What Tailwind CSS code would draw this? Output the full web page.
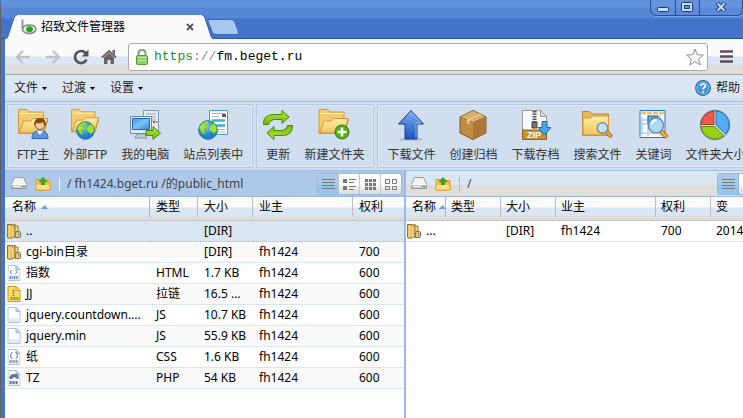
<!DOCTYPE html>
<html lang="zh-CN">
<head>
<meta charset="utf-8">
<title>招致文件管理器</title>
<script src="https://cdn.jsdelivr.net/npm/@tailwindcss/browser@4"></script>
</head>
<body class="h-screen overflow-hidden bg-[#4474ca] font-['Noto_Sans','Noto_Sans_CJK_SC',sans-serif] text-xs leading-4 text-black">
<svg class="absolute h-0 w-0" aria-hidden="true">
  <defs>
    <linearGradient id="gf" x2="0" y2="1"><stop stop-color="#fff0a8"/><stop offset="1" stop-color="#f0c15c"/></linearGradient>
    <linearGradient id="gg" x2="0" y2="1"><stop stop-color="#c2e83a"/><stop offset="1" stop-color="#6cb80c"/></linearGradient>
    <radialGradient id="gw" cx=".4" cy=".3"><stop stop-color="#7fd4ff"/><stop offset="1" stop-color="#1f80cf"/></radialGradient>
    <linearGradient id="gb" x2="0" y2="1"><stop stop-color="#7fb0f2"/><stop offset="1" stop-color="#1b53bd"/></linearGradient>
    <linearGradient id="gs" x2="1" y2="1"><stop stop-color="#3c97e6"/><stop offset=".5" stop-color="#7cc3f7"/><stop offset="1" stop-color="#2b84da"/></linearGradient>
    <symbol id="folder" viewBox="0 0 30 30"><path d="M.5 24.500V2q0-1.500 1.500-1.500h7L11 3h14.500V10L30 10l-4 14.500z" fill="#f3cc72" stroke="#cf9a3a"/><path d="M1 24l4.500-12h7l3-2.500H29.500L25 24z" fill="url(#gf)" stroke="#d09a38"/><path d="M2 4.500h23" stroke="#fff2c4"/></symbol>
    <symbol id="globe" viewBox="0 0 20 20"><circle cx="10" cy="10" r="9.300" fill="url(#gw)" stroke="#1b6fb8"/><path d="M4 3.500q4-3 7-2.500l-1 3-3 1 2 3-3 2 1 5-3-2-3-5q1-3 3-4.500zM12 6l4-3q3 3 3 7l-3 4-2-2-3-2z" fill="#a6e12e" stroke="#5fae2c" stroke-width=".6"/></symbol>
    <symbol id="rowfolder" viewBox="0 0 14 16"><path d="M6 3h5v10.500H6z" fill="#f0d68a" stroke="#a07a30"/><path d="M9 8.500h3.500q1 0 1 1.500v3q0 1.500-1.500 1.500H8z" fill="#e7c878" stroke="#96702a"/><path d="M.5 14.500V1.500h5v1L8 1v12.500L3.500 15.500z" fill="#e3bd5e" stroke="#96702a"/><path d="M2.500 3v11" stroke="#f9e5a4"/><path d="M5.500 4v9.500" stroke="#f4da8e" stroke-width="1.500"/><path d="M11.500 9.500v3" stroke="#5b9bd8"/></symbol>
    <symbol id="sheet" viewBox="0 0 13 16"><path d="M.5.5h8l4 4v11H.5z" fill="#fdfeff" stroke="#b3c2d6"/><path d="M1 11h11v4H1z" fill="#dfeaf8"/><path d="M8.500.5v4h4z" fill="#c9dcf2" stroke="#a5bbd8"/></symbol>
    <symbol id="drive" viewBox="0 0 16 13"><path d="M3.500.500h9L15.500 7v4.500h-15V7z" fill="#f4f4f4" stroke="#999"/><path d="M1 7.500h14v3.500H1z" fill="#c6c6c6"/><path d="M.5 7.500h15M3 9.500h6" stroke="#fff"/><path d="M12 9.500h2" stroke="#4b9b3a"/></symbol>
    <symbol id="upfolder" viewBox="0 0 16 14"><path d="M1 13V2.500h4l1 1h9V13z" fill="#f7c64e" stroke="#e39a2a"/><path d="M1 7h14v6H1z" fill="#fde38a" stroke="#e8a436"/><path d="M8 .5L12 4.500H9.500v3h-3v-3H4z" fill="#35b51c" stroke="#218a10" stroke-width=".7"/></symbol>
    <symbol id="lines" viewBox="0 0 20 20"><path d="M4 5.500h13M4 8.500h13M4 11.500h13M4 14.500h13" stroke="#777"/></symbol>
  </defs>
</svg>
<div class="flex h-full flex-col rounded-tl-md border-l border-[#5f6066] bg-[#4474ca] pl-1">
  <!-- title bar -->
  <header class="-ml-1 flex h-[39px] shrink-0 justify-between border-b border-[#2a569f] bg-[linear-gradient(#6192dc_7px,#5587d6_8px,#5587d6_18px,#4474ca_19px)] pl-1">
    <div class="-mb-px flex items-end">
      <div class="flex h-6 items-stretch">
        <svg class="h-6 w-3" viewBox="0 0 12 24"><path d="M0 24q2 0 3-3L9 3q1-3 3-3v24z" fill="#fafafa"/><path d="M0 24q2 0 3-3L9 3q1-3 3-3" fill="none" stroke="#3765b4"/></svg>
        <div class="flex w-[185px] items-center bg-[#fafafa] pl-1">
          <svg class="h-4 w-4 shrink-0" viewBox="0 0 16 16"><path d="M1.500.5V11M1.500 10.200q.5-4 6.800-4t6.500 4q-.5 4.300-6.500 4.300t-6.800-4.300z" fill="none" stroke="#8d8d8d" stroke-width="1.800"/><ellipse cx="8.500" cy="10.200" rx="3.400" ry="2.900" fill="#21a813"/></svg>
          <span class="ml-1 grow">招致文件管理器</span>
          <button aria-label="关闭标签页" class="mr-2"><svg class="h-2 w-2" viewBox="0 0 8 8"><path d="M1 1l6 6M7 1L1 7" stroke="#555" stroke-width="1.800"/></svg></button>
        </div>
        <svg class="h-6 w-3" viewBox="0 0 12 24"><path d="M0 0q2 0 3 3l6 18q1 3 3 3H0z" fill="#fafafa"/><path d="M0 0q2 0 3 3l6 18q1 3 3 3" fill="none" stroke="#2f5cab"/></svg>
      </div>
      <button aria-label="新标签页" class="-ml-1.5 mb-1"><svg class="h-4 w-8" viewBox="0 0 32 16"><path d="M1 .5h22q3 0 4 3l3.500 9.500q.5 2.500-2 2.500H8q-3 0-4-3L0 2.500Q0 .5 1 .5z" fill="#a5c8f0" stroke="#3c69b6"/></svg></button>
    </div>
    <div class="flex h-4 w-[93px] rounded-b-md border border-t-0 border-[#2b4f91] bg-[linear-gradient(#6594de_7px,#5a8ad8_8px)] shadow-[0_1px_#77a5e8]">
      <button aria-label="最小化" class="flex flex-1 justify-center border-r border-[#2b4f91] pt-[7px]"><svg class="h-[5px] w-3" viewBox="0 0 12 5"><rect x=".5" y=".5" width="11" height="4" rx="1" fill="#c4dcf6" stroke="#1f3d70"/></svg></button>
      <button aria-label="最大化" class="flex flex-1 justify-center border-r border-[#2b4f91] pt-0.5"><svg class="h-[10px] w-3" viewBox="0 0 12 10"><rect x=".5" y=".5" width="11" height="9" rx="1" fill="#c4dcf6" stroke="#1f3d70"/><path d="M3.500 3.500h5v3h-5z" fill="#6493dc" stroke="#1f3d70"/></svg></button>
      <button aria-label="关闭" class="flex w-[42px] justify-center pt-0.5"><svg class="h-[10px] w-3" viewBox="0 0 12 10"><path d="M2 .8l8 8.400M10 .8L2 9.200" stroke="#1f3d70" stroke-width="4"/><path d="M2.500 1.200l7 7.600M9.500 1.200l-7 7.600" stroke="#c4dcf6" stroke-width="2"/></svg></button>
    </div>
  </header>
  <!-- address bar -->
  <nav class="flex h-9 shrink-0 items-center border-b border-[#a5a5a5] bg-[linear-gradient(#fafafa_17px,#dae6f4_18px,#dae6f4_25px,#dfdedb_26px)] pr-2.5 pl-2">
    <button aria-label="后退" class="ml-0.5"><svg class="h-4 w-4" viewBox="0 0 16 16"><path d="M8 2L2 8l6 6M2 8h13" fill="none" stroke="#c3c3c3" stroke-width="2.400"/></svg></button>
    <button aria-label="前进" class="ml-3.5"><svg class="h-4 w-4" viewBox="0 0 16 16"><path d="M8 2l6 6-6 6M14 8H1" fill="none" stroke="#c3c3c3" stroke-width="2.400"/></svg></button>
    <button aria-label="刷新" class="ml-3"><svg class="h-4 w-4" viewBox="0 0 16 16"><path d="M13.500 10.500A6 6 0 1 1 12.500 4" fill="none" stroke="#5a5155" stroke-width="2.700"/><path d="M15.500.5v7h-7z" fill="#5a5155"/></svg></button>
    <button aria-label="主页" class="ml-3"><svg class="h-4 w-4" viewBox="0 0 16 16"><path d="M1 8.500L8 2l7 6.500" fill="none" stroke="#6a6266" stroke-width="2"/><path d="M3 8.500L8 4l5 4.500V15h-3.500v-4h-3v4H3zM11.500 1H14v5l-2.500-2z" fill="#6a6266"/></svg></button>
    <div class="ml-[11px] flex h-7 grow items-center rounded-[3px] border border-[#a9a9a9] bg-white px-[7px]">
      <svg class="h-4 w-3 shrink-0" viewBox="0 0 12 16"><path d="M2.500 7V4q0-3 3.500-3t3.500 3v3" fill="none" stroke="#8d9b8d" stroke-width="2"/><rect x=".5" y="6.500" width="11" height="9" rx="1" fill="#8fd065" stroke="#4c9c35"/><path d="M2 8.500h8M2 11.500h8" stroke="#c3eba5"/></svg>
      <div role="textbox" aria-label="地址" tabindex="0" class="ml-1.5 grow font-['Liberation_Mono',monospace] text-[13px]"><span class="text-[#169516]">https</span><span class="text-[#888]">://</span>fm.beget.ru</div>
      <button aria-label="收藏"><svg class="-mr-1 h-[18px] w-[18px]" viewBox="0 0 18 18"><path d="M9 1l2.200 5.700 6.200.4-4.800 3.900 1.600 6L9 13.600 3.800 17l1.600-6L.6 7.100l6.200-.4z" fill="#fff" stroke="#8d8d8d" stroke-linejoin="round"/></svg></button>
    </div>
    <button aria-label="菜单" class="ml-3"><svg class="h-[13px] w-[13px]" viewBox="0 0 13 13"><path d="M0 1.500h13M0 6.500h13M0 11.500h13" stroke="#5d5058" stroke-width="2.700"/></svg></button>
  </nav>
  <!-- menu bar -->
  <div class="flex h-[26px] shrink-0 items-center gap-[15px] bg-linear-to-b from-[#dae6f4] from-80% to-[#d0deef] to-90% pr-[3px] pl-[9px] text-[#222]">
    <button class="flex items-center gap-1">文件<svg class="h-[3px] w-[5px]" viewBox="0 0 5 3"><path d="M0 0h5L2.500 3z"/></svg></button>
    <button class="flex items-center gap-1">过渡<svg class="h-[3px] w-[5px]" viewBox="0 0 5 3"><path d="M0 0h5L2.500 3z"/></svg></button>
    <button class="flex items-center gap-1">设置<svg class="h-[3px] w-[5px]" viewBox="0 0 5 3"><path d="M0 0h5L2.500 3z"/></svg></button>
    <button class="ml-auto flex items-center gap-[5px]"><svg class="h-4 w-4" viewBox="0 0 16 16"><circle cx="8" cy="8" r="7.300" fill="#4595d5" stroke="#205e9c" stroke-width="1.200"/><circle cx="8" cy="8" r="6.200" fill="none" stroke="#9cd0f5" stroke-width=".8"/><path d="M5.500 6.300Q5.500 4 8 4t2.500 2q0 1-1.500 1.800-1 .6-1 1.700M8 11v1.700" fill="none" stroke="#fff" stroke-width="1.600"/></svg>帮助</button>
  </div>
  <!-- main toolbar -->
  <div class="flex h-[70px] shrink-0 gap-[3px] overflow-hidden border-y border-[#9dbde6] bg-[#d0deef] px-0.5 py-0.5 whitespace-nowrap text-[#333]">
    <div class="flex shrink-0 gap-3.5 rounded-xs border border-[#b4c9e0] px-[9px] pt-1 shadow-[inset_0_0_0_1px_#dfe9f5] [&>button]:flex [&>button]:flex-col [&>button]:items-center [&>button]:gap-1.5 [&_svg]:h-8 [&_svg]:w-8">
      <button><svg viewBox="0 0 32 32"><use href="#folder" x="1" y="0" width="30" height="30"/><path d="M15 29.500q0-7.500 6-7.500h4q6 0 6 7.500z" fill="#5b94df" stroke="#2a66b4"/><path d="M20 22h6l-3 4z" fill="#fff"/><circle cx="23" cy="15.500" r="5" fill="#f4c793" stroke="#8a5a2a"/><path d="M17.500 17q-1-8 5.500-8t5.500 8q-2-1-2.500-4-3 2-6.500 1z" fill="#7b4a1e"/></svg>FTP主</button>
      <button><svg viewBox="0 0 32 32"><use href="#folder" x="2" y="0" width="28" height="28"/><use href="#globe" x="7" y="12" width="19" height="19"/></svg>外部FTP</button>
      <button><svg viewBox="0 0 32 32"><path d="M14.500 1.500h15v25h-15z" fill="#e6edf7" stroke="#8798b5"/><path d="M17 5h10M17 8h10M17 11h10" stroke="#8fa2bf"/><path d="M24 13h2" stroke="#e33" stroke-width="2"/><path d="M27 13h1.500" stroke="#3a3" stroke-width="2"/><path d="M1.500 7.500h21v17h-21z" fill="#dfe8f4" stroke="#7188ab"/><path d="M3.500 9.500h17v11h-17z" fill="url(#gs)" stroke="#2a6bb5"/><path d="M8 25h8l2 4H6z" fill="#c3cede" stroke="#7e90ad"/><path d="M17 21.500h7v-4l7.500 6.500-7.500 6.500v-4h-7z" fill="url(#gg)" stroke="#4a8a0c"/></svg>我的电脑</button>
      <button><svg viewBox="0 0 32 32"><path d="M12.500 1.500h18v24h-18z" fill="#fff" stroke="#4b9ccf"/><path d="M15 4.500h13M15 7.500h7M15 20.500h13M15 23h13" stroke="#a5b4c4"/><path d="M15 11.500h13M15 16.500h13" stroke="#35b2dc" stroke-width="2.500"/><path d="M25 5h4v3h-4z" fill="#557"/><use href="#globe" x="1" y="11" width="20" height="20"/></svg>站点列表中</button>
    </div>
    <div class="flex shrink-0 gap-3.5 rounded-xs border border-[#b4c9e0] px-[9px] pt-1 shadow-[inset_0_0_0_1px_#dfe9f5] [&>button]:flex [&>button]:flex-col [&>button]:items-center [&>button]:gap-1.5 [&_svg]:h-8 [&_svg]:w-8">
      <button class="-mx-1"><svg viewBox="0 0 32 32"><path id="ra" d="M1.500 15.500Q1 5.500 12 5.500h8v-4l7 6.500-7 6.500v-4h-7q-5 0-6.500 5z" fill="url(#gg)" stroke="#3f8a0c"/><use href="#ra" transform="rotate(180 16 16)"/></svg>更新</button>
      <button><svg viewBox="0 0 32 32"><use href="#folder" x="0" y="0" width="31" height="30"/><circle cx="24" cy="23" r="7" fill="#55ae18" stroke="#2e7a0c"/><path d="M24 18.500v9M19.500 23h9" stroke="#fff" stroke-width="2.600"/></svg>新建文件夹</button>
    </div>
    <div class="flex shrink-0 gap-3.5 rounded-xs border border-[#b4c9e0] px-[9px] pt-1 shadow-[inset_0_0_0_1px_#dfe9f5] [&>button]:flex [&>button]:flex-col [&>button]:items-center [&>button]:gap-1.5 [&_svg]:h-8 [&_svg]:w-8">
      <button><svg viewBox="0 0 32 32"><path d="M5 30.500h22" stroke="#aab6c9" stroke-width="2"/><path d="M16 1.500L28.500 15H22v15H10V15H3.500z" fill="url(#gb)" stroke="#173f91"/><path d="M16 3L26 14h-5v15" fill="none" stroke="#9cc4f7" stroke-width=".8"/></svg>下载文件</button>
      <button><svg viewBox="0 0 32 32"><path d="M3 8l13-6.500L29 8v16l-13 6.500L3 24z" fill="#c18d45" stroke="#80551c"/><path d="M3 8l13 5.500L29 8 16 1.500z" fill="#dbb06c" stroke="#96682a" stroke-width=".7"/><path d="M16 13.500v17L29 24V8z" fill="#ad7833"/><path d="M22.500 4.500L10 10.500v4l2.500 1v-4l12-6z" fill="#e6c68c"/></svg>创建归档</button>
      <button><svg viewBox="0 0 32 32"><path d="M3.500 1.500h18l6 6v23h-24z" fill="#fafafa" stroke="#9a9a9a"/><path d="M21.500 1.500v6h6z" fill="#ddd" stroke="#999"/><path d="M15.500 2v12" stroke="#555" stroke-width="4" stroke-dasharray="1.500 1"/><path d="M13 13h5v6h-5z" fill="#777" stroke="#444"/><path d="M3.500 21h24v9.500h-24z" fill="#c99037" stroke="#94641a"/><text x="8" y="29" class="fill-white font-['Liberation_Sans'] text-[9px] font-bold">ZIP</text><path d="M23 12.500h5v6h4L25.500 26 19 18.500h4z" fill="#4aa5e6" stroke="#1d69a8"/></svg>下载存档</button>
      <button><svg viewBox="0 0 32 32"><path d="M1.500 26.500V2.500h7L11 5h16.500v21.500z" fill="#e9bb55" stroke="#bf8828"/><path d="M2 9h7l3-2h15.500v19H2z" fill="url(#gf)" stroke="#d19b39"/><path d="M25 22l5.500 6" stroke="#a86820" stroke-width="4"/><path d="M25 22l5 5.500" stroke="#f4b04c" stroke-width="2"/><circle cx="21.500" cy="19" r="5.200" fill="#bfe3fa" stroke="#7e8da0" stroke-width="1.500"/></svg>搜索文件</button>
      <button><svg viewBox="0 0 32 32"><path d="M3 1.500h25v27H3z" fill="#fff" stroke="#1f78c0"/><path d="M4 4h23" stroke="#f2c55c" stroke-width="3" stroke-dasharray="5 1"/><path d="M5 8v18M5 11h20M5 15h20M5 24h20M11 6v21M23 6v21" stroke="#a9d0ee" stroke-width="1.500"/><path d="M11 7h10v8H11z" fill="#68a7e8" stroke="#2361a8"/><path d="M24 22l6 6.500" stroke="#b06d1c" stroke-width="4.500"/><path d="M24 22l5.500 6" stroke="#ffb540" stroke-width="2.500"/><circle cx="19" cy="16.500" r="7.500" fill="#a9dbf7" stroke="#7b8ea5" stroke-width="1.700"/><path d="M14.500 15q1-4 5-4" fill="none" stroke="#fff" stroke-width="2"/></svg>关键词</button>
      <button><svg viewBox="0 0 32 32"><circle cx="16" cy="16" r="14.800" fill="#d9e9f6" stroke="#5e7e92"/><path d="M15 15.500V2A14 14 0 0 0 2 15.500z" fill="#ef5a48" stroke="#b5302a"/><path d="M17 2v14l9.500 9A14 14 0 0 0 17 2z" fill="#55aef0" stroke="#1b6eb8"/><path d="M2 17.500h13.500l9.500 9A14 14 0 0 1 2 17.500z" fill="#98cf18" stroke="#558f0c"/></svg>文件夹大小</button>
    </div>
  </div>
  <!-- file panels -->
  <main class="grid min-h-0 grow grid-cols-[401fr_337fr] bg-white">
    <section class="flex min-w-0 flex-col overflow-hidden border-r-2 border-[#9bb9e8]">
      <div class="flex h-[26px] shrink-0 items-center border-b border-[#9ab8de] bg-[#adc8e8] pr-0.5 pl-1.5 text-[#444]">
        <button aria-label="磁盘"><svg class="h-[13px] w-4"><use href="#drive"/></svg></button>
        <button aria-label="上级目录" class="ml-2"><svg class="h-3.5 w-4"><use href="#upfolder"/></svg></button>
        <span class="mr-[7px] ml-2 h-3.5 border-l border-white"></span>
        <span class="grow whitespace-nowrap">/ fh1424.bget.ru /的public_html</span>
        <div class="flex h-[22px] shrink-0 overflow-hidden rounded-[3px] border border-[#98b8e0] bg-linear-to-b from-[#fcfcfc] from-50% to-[#dfdedb] to-90% [&>button]:border-r [&>button]:border-[#c5c5c5] [&>button:last-child]:border-0 [&_svg]:h-5 [&_svg]:w-5">
          <button aria-label="列表" class="bg-linear-to-b from-[#acc8e9] from-50% to-[#92c4f0] to-60%"><svg><use href="#lines"/></svg></button>
          <button aria-label="详细信息"><svg viewBox="0 0 20 20"><path d="M4 5h4v4H4zM4 12h4v4H4z" fill="#777"/><path d="M10 5.500h7M10 8.500h5M10 12.500h7M10 15.500h5" stroke="#777"/></svg></button>
          <button aria-label="小图标"><svg viewBox="0 0 20 20"><path d="M5 6.500h12M5 10.500h12M5 14.500h12" stroke="#777" stroke-width="3" stroke-dasharray="3 1"/></svg></button>
          <button aria-label="大图标"><svg viewBox="0 0 20 20"><path d="M4.500 5.500h4v4h-4zM11.500 5.500h4v4h-4zM4.500 12.500h4v3h-4zM11.500 12.500h4v3h-4z" fill="none" stroke="#777"/></svg></button>
        </div>
      </div>
      <table class="w-full table-fixed border-separate border-spacing-0 text-left [&_td]:h-[21px] [&_td]:overflow-hidden [&_td]:border-b [&_td]:border-[#d9e5f3] [&_td]:pl-1.5 [&_td]:whitespace-nowrap [&_td:first-child]:pl-0.5 [&_th]:h-[24px] [&_th]:border-b [&_th]:border-[#c5c5c5] [&_th]:bg-[linear-gradient(#fafafa_10px,#dae6f4_11px,#dae6f4_18px,#dfdedb_20px)] [&_th]:align-top [&_th]:font-normal">
        <colgroup><col class="w-[145px]"><col class="w-12"><col class="w-[55px]"><col class="w-[100px]"><col></colgroup>
        <thead><tr>
          <th><div class="flex h-5 items-center gap-[5px] border-r border-[#9ab8de] pl-[7px]">名称<svg class="h-1 w-[7px]" viewBox="0 0 7 4"><path d="M0 4h7L3.500 0z" fill="#6a9be0"/></svg></div></th>
          <th><div class="h-5 border-r border-[#bbb] pt-0.5 pl-1.5">类型</div></th>
          <th><div class="h-5 border-r border-[#bbb] pt-0.5 pl-1.5">大小</div></th>
          <th><div class="h-5 border-r border-[#bbb] pt-0.5 pl-1.5">业主</div></th>
          <th><div class="h-5 pt-0.5 pl-1.5">权利</div></th>
        </tr></thead>
        <tbody>
          <tr class="bg-[#d9e5f3] [&>td]:border-dotted [&>td]:border-[#a3bae9]"><td><div class="flex items-center gap-[5px]"><svg class="h-4 w-3.5 shrink-0"><use href="#rowfolder"/></svg>..</div></td><td></td><td>[DIR]</td><td></td><td></td></tr>
          <tr class="bg-[#fafafa]"><td><div class="flex items-center gap-[5px]"><svg class="h-4 w-3.5 shrink-0"><use href="#rowfolder"/></svg>cgi-bin目录</div></td><td></td><td>[DIR]</td><td>fh1424</td><td>700</td></tr>
          <tr><td><div class="flex items-center gap-[5px]"><svg class="h-4 w-3.5 shrink-0" viewBox="0 0 13 16"><use href="#sheet"/><path d="M4.500 5L2.500 7l2 2M8 5l2 2-2 2" fill="none" stroke="#5c7892"/><path d="M2 12.500h9" stroke="#7891a8" stroke-width="3" stroke-dasharray="1.500 .7"/></svg>指数</div></td><td>HTML</td><td>1.7 KB</td><td>fh1424</td><td>600</td></tr>
          <tr class="bg-[#fafafa]"><td><div class="flex items-center gap-[5px]"><svg class="h-4 w-3.5 shrink-0" viewBox="0 0 13 16"><path d="M.5.5h8l4 4v11H.5z" fill="#f7dc70" stroke="#c99a20"/><path d="M8.500.5v4h4z" fill="#fff2b0" stroke="#c99a20"/><path d="M6 4v6" stroke="#a87b14" stroke-width="2" stroke-dasharray="1.500 1"/><path d="M3 12.500h8" stroke="#b08218" stroke-width="3" stroke-dasharray="2 1"/></svg>JJ</div></td><td>拉链</td><td>16.5 ...</td><td>fh1424</td><td>600</td></tr>
          <tr><td><div class="flex items-center gap-[5px]"><svg class="h-4 w-3.5 shrink-0"><use href="#sheet"/></svg>jquery.countdown....</div></td><td>JS</td><td>10.7 KB</td><td>fh1424</td><td>600</td></tr>
          <tr class="bg-[#fafafa]"><td><div class="flex items-center gap-[5px]"><svg class="h-4 w-3.5 shrink-0"><use href="#sheet"/></svg>jquery.min</div></td><td>JS</td><td>55.9 KB</td><td>fh1424</td><td>600</td></tr>
          <tr><td><div class="flex items-center gap-[5px]"><svg class="h-4 w-3.5 shrink-0" viewBox="0 0 13 16"><use href="#sheet"/><path d="M5 3.500q-1.500 0-1.500 1.500t-1 1.500q1 0 1 1.500T5 9.500M8 3.500q1.500 0 1.500 1.500t1 1.500q-1 0-1 1.500T8 9.500" fill="none" stroke="#5c7892"/><path d="M2 12.500h9" stroke="#8a9bad" stroke-width="3" stroke-dasharray="2 1"/></svg>纸</div></td><td>CSS</td><td>1.6 KB</td><td>fh1424</td><td>600</td></tr>
          <tr class="bg-[#fafafa]"><td><div class="flex items-center gap-[5px]"><svg class="h-4 w-3.5 shrink-0" viewBox="0 0 13 16"><use href="#sheet"/><path d="M2 9V6.500Q3 4 6 4h3q2 0 2 2v3H9V7.500H5V9z" fill="#5c7892"/><path d="M2 12.500h9" stroke="#5c7892" stroke-width="3" stroke-dasharray="2 1"/></svg>TZ</div></td><td>PHP</td><td>54 KB</td><td>fh1424</td><td>600</td></tr>
        </tbody>
      </table>
    </section>
    <section class="flex min-w-0 flex-col overflow-hidden">
      <div class="flex h-[26px] shrink-0 items-center border-b border-[#9ab8de] bg-linear-to-b from-[#dae6f4] from-50% to-[#dfdedb] to-60% pl-[5px] text-[#444]">
        <button aria-label="磁盘"><svg class="h-[13px] w-4"><use href="#drive"/></svg></button>
        <button aria-label="上级目录" class="ml-2"><svg class="h-3.5 w-4"><use href="#upfolder"/></svg></button>
        <span class="mr-[7px] ml-2 h-3.5 border-l border-[#8fc0ee]"></span>
        <span class="grow">/</span>
        <div class="flex h-[22px] w-[26px] shrink-0 overflow-hidden rounded-l-[3px] border border-r-0 border-[#98b8e0] bg-linear-to-b from-[#fcfcfc] from-50% to-[#dfdedb] to-90%">
          <button aria-label="列表" class="shrink-0 border-r border-[#98b8e0] bg-linear-to-b from-[#acc8e9] from-50% to-[#92c4f0] to-60%"><svg class="h-5 w-5"><use href="#lines"/></svg></button>
        </div>
      </div>
      <table class="w-full table-fixed border-separate border-spacing-0 text-left whitespace-nowrap [&_td]:h-[21px] [&_td]:border-b [&_td]:border-[#d9e5f3] [&_td]:pl-[5px] [&_td:first-child]:pl-px [&_th]:h-[24px] [&_th]:border-b [&_th]:border-[#c5c5c5] [&_th]:bg-[linear-gradient(#fafafa_10px,#dae6f4_11px,#dae6f4_18px,#dfdedb_20px)] [&_th]:align-top [&_th]:font-normal">
        <colgroup><col class="w-10"><col class="w-[55px]"><col class="w-[55px]"><col class="w-[100px]"><col class="w-[55px]"><col></colgroup>
        <thead><tr>
          <th><div class="flex h-5 items-center gap-[3px] overflow-hidden border-r border-[#9ab8de] pl-1.5">名称<svg class="h-1 w-[7px] shrink-0" viewBox="0 0 7 4"><path d="M0 4h7L3.500 0z" fill="#6a9be0"/></svg></div></th>
          <th><div class="h-5 border-r border-[#bbb] pt-0.5 pl-[5px]">类型</div></th>
          <th><div class="h-5 border-r border-[#bbb] pt-0.5 pl-[5px]">大小</div></th>
          <th><div class="h-5 border-r border-[#bbb] pt-0.5 pl-[5px]">业主</div></th>
          <th><div class="h-5 border-r border-[#bbb] pt-0.5 pl-[5px]">权利</div></th>
          <th><div class="h-5 pt-0.5 pl-[5px]">变</div></th>
        </tr></thead>
        <tbody>
          <tr><td><div class="flex items-center gap-[5px]"><svg class="h-4 w-3.5 shrink-0"><use href="#rowfolder"/></svg>...</div></td><td></td><td>[DIR]</td><td>fh1424</td><td>700</td><td>2014</td></tr>
        </tbody>
      </table>
    </section>
  </main>
</div>
</body>
</html>
